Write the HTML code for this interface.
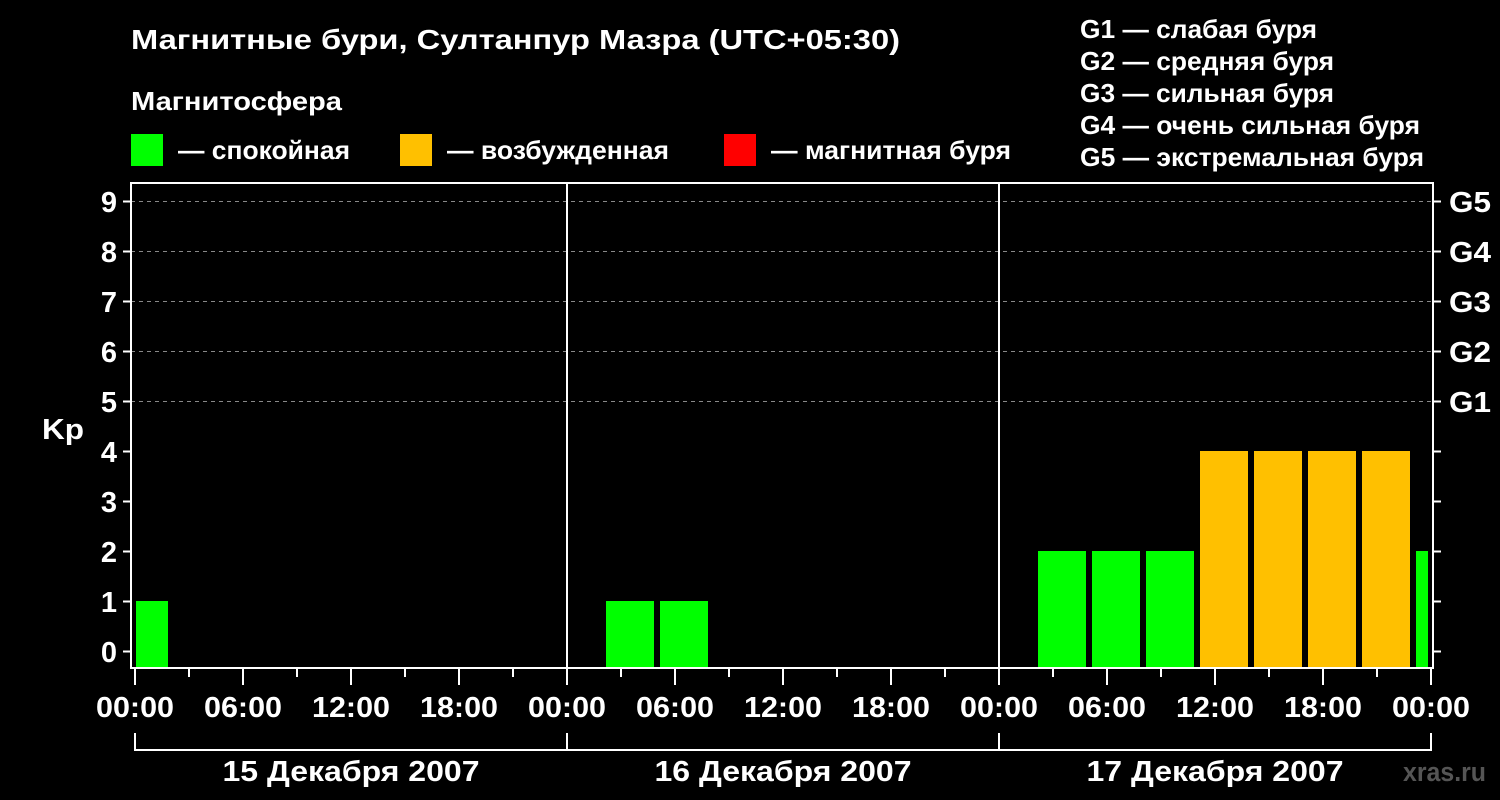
<!DOCTYPE html><html><head><meta charset="utf-8"><style>body{margin:0;background:#000}svg{display:block}text{font-family:"Liberation Sans",sans-serif;font-weight:bold;fill:#fff}</style></head><body>
<svg width="1500" height="800" viewBox="0 0 1500 800">
<rect width="1500" height="800" fill="#000"/>
<text x="131" y="49" font-size="28" textLength="769" lengthAdjust="spacingAndGlyphs">Магнитные бури, Султанпур Мазра (UTC+05:30)</text>
<text x="131" y="110" font-size="26" textLength="211" lengthAdjust="spacingAndGlyphs">Магнитосфера</text>
<rect x="131" y="134" width="32" height="32" fill="#00ff00"/><text x="178" y="159" font-size="26" textLength="172" lengthAdjust="spacingAndGlyphs">— спокойная</text>
<rect x="400" y="134" width="32" height="32" fill="#ffc000"/><text x="447" y="159" font-size="26" textLength="222" lengthAdjust="spacingAndGlyphs">— возбужденная</text>
<rect x="724" y="134" width="32" height="32" fill="#ff0000"/><text x="771" y="159" font-size="26" textLength="240" lengthAdjust="spacingAndGlyphs">— магнитная буря</text>
<g font-size="26" lengthAdjust="spacingAndGlyphs"><text x="1080" y="38" textLength="237" lengthAdjust="spacingAndGlyphs">G1 — слабая буря</text><text x="1080" y="70" textLength="254" lengthAdjust="spacingAndGlyphs">G2 — средняя буря</text><text x="1080" y="102" textLength="254" lengthAdjust="spacingAndGlyphs">G3 — сильная буря</text><text x="1080" y="134" textLength="340" lengthAdjust="spacingAndGlyphs">G4 — очень сильная буря</text><text x="1080" y="166" textLength="344" lengthAdjust="spacingAndGlyphs">G5 — экстремальная буря</text></g>
<g stroke="#888" stroke-dasharray="4,4" stroke-width="1"><line x1="131" y1="201.5" x2="1433" y2="201.5"/><line x1="131" y1="251.5" x2="1433" y2="251.5"/><line x1="131" y1="301.5" x2="1433" y2="301.5"/><line x1="131" y1="351.5" x2="1433" y2="351.5"/><line x1="131" y1="401.5" x2="1433" y2="401.5"/></g>
<g fill="#00ff00"><rect x="136" y="601" width="32" height="67"/><rect x="606" y="601" width="48" height="67"/><rect x="660" y="601" width="48" height="67"/><rect x="1038" y="551" width="48" height="117"/><rect x="1092" y="551" width="48" height="117"/><rect x="1146" y="551" width="48" height="117"/><rect x="1416" y="551" width="12" height="117"/></g>
<g fill="#ffc000"><rect x="1200" y="451" width="48" height="217"/><rect x="1254" y="451" width="48" height="217"/><rect x="1308" y="451" width="48" height="217"/><rect x="1362" y="451" width="48" height="217"/></g>
<g stroke="#fff" stroke-width="2" fill="none"><rect x="131" y="183" width="1302" height="485"/><line x1="567" y1="183" x2="567" y2="668"/><line x1="999" y1="183" x2="999" y2="668"/>
<path d="M123 201.5H131M123 251.5H131M123 301.5H131M123 351.5H131M123 401.5H131M123 451.5H131M123 501.5H131M123 551.5H131M123 601.5H131M123 651.5H131"/>
<path d="M1433 201.5H1441M1433 251.5H1441M1433 301.5H1441M1433 351.5H1441M1433 401.5H1441M1433 451.5H1441M1433 501.5H1441M1433 551.5H1441M1433 601.5H1441M1433 651.5H1441"/>
<path d="M135 668V685M243 668V685M351 668V685M459 668V685M567 668V685M675 668V685M783 668V685M891 668V685M999 668V685M1107 668V685M1215 668V685M1323 668V685M1431 668V685"/>
<path d="M189 668V677M297 668V677M405 668V677M513 668V677M621 668V677M729 668V677M837 668V677M945 668V677M1053 668V677M1161 668V677M1269 668V677M1377 668V677"/>
<path d="M135 733V750H1431V733M567 733V750M999 733V750"/></g>
<g font-size="29" text-anchor="end"><text x="117" y="212">9</text><text x="117" y="262">8</text><text x="117" y="312">7</text><text x="117" y="362">6</text><text x="117" y="412">5</text><text x="117" y="462">4</text><text x="117" y="512">3</text><text x="117" y="562">2</text><text x="117" y="612">1</text><text x="117" y="662">0</text></g>
<text x="42" y="439" font-size="29" textLength="42" lengthAdjust="spacingAndGlyphs">Kp</text>
<g font-size="29"><text x="1449" y="212" textLength="42" lengthAdjust="spacingAndGlyphs">G5</text><text x="1449" y="262" textLength="42" lengthAdjust="spacingAndGlyphs">G4</text><text x="1449" y="312" textLength="42" lengthAdjust="spacingAndGlyphs">G3</text><text x="1449" y="362" textLength="42" lengthAdjust="spacingAndGlyphs">G2</text><text x="1449" y="412" textLength="42" lengthAdjust="spacingAndGlyphs">G1</text></g>
<g font-size="29" text-anchor="middle"><text x="135" y="717" textLength="78" lengthAdjust="spacingAndGlyphs">00:00</text><text x="243" y="717" textLength="78" lengthAdjust="spacingAndGlyphs">06:00</text><text x="351" y="717" textLength="78" lengthAdjust="spacingAndGlyphs">12:00</text><text x="459" y="717" textLength="78" lengthAdjust="spacingAndGlyphs">18:00</text><text x="567" y="717" textLength="78" lengthAdjust="spacingAndGlyphs">00:00</text><text x="675" y="717" textLength="78" lengthAdjust="spacingAndGlyphs">06:00</text><text x="783" y="717" textLength="78" lengthAdjust="spacingAndGlyphs">12:00</text><text x="891" y="717" textLength="78" lengthAdjust="spacingAndGlyphs">18:00</text><text x="999" y="717" textLength="78" lengthAdjust="spacingAndGlyphs">00:00</text><text x="1107" y="717" textLength="78" lengthAdjust="spacingAndGlyphs">06:00</text><text x="1215" y="717" textLength="78" lengthAdjust="spacingAndGlyphs">12:00</text><text x="1323" y="717" textLength="78" lengthAdjust="spacingAndGlyphs">18:00</text><text x="1431" y="717" textLength="78" lengthAdjust="spacingAndGlyphs">00:00</text>
<text x="351" y="781" textLength="257" lengthAdjust="spacingAndGlyphs">15 Декабря 2007</text><text x="783" y="781" textLength="257" lengthAdjust="spacingAndGlyphs">16 Декабря 2007</text><text x="1215" y="781" textLength="257" lengthAdjust="spacingAndGlyphs">17 Декабря 2007</text></g>
<text x="1486" y="781" font-size="27" text-anchor="end" textLength="83" lengthAdjust="spacingAndGlyphs" style="fill:#555">xras.ru</text>
</svg></body></html>
